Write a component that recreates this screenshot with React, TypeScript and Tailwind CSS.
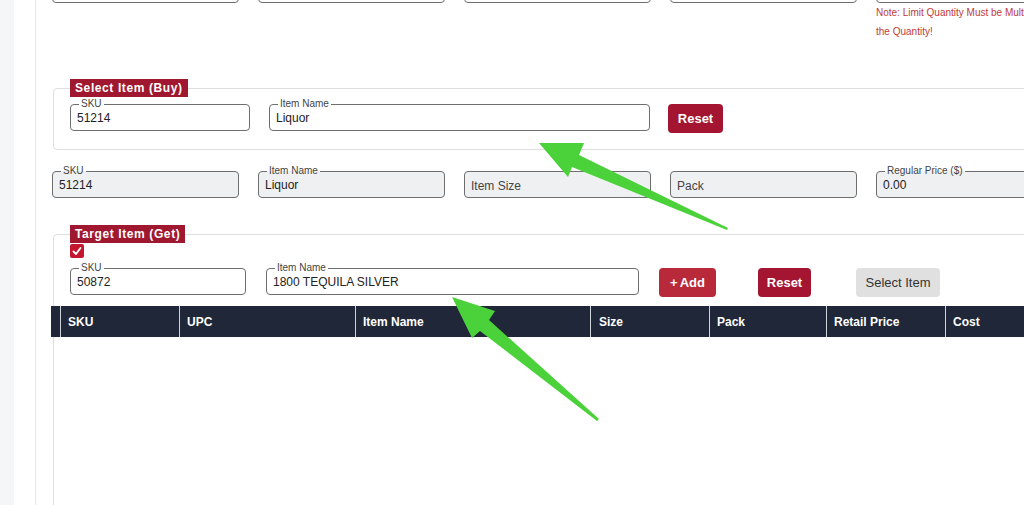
import React from "react";

type FieldProps = {
  label?: string;
  value?: string;
  placeholder?: string;
  gray?: boolean;
  className: string;
};

function Field({ label, value, placeholder, gray, className }: FieldProps) {
  return (
    <div
      className={`relative h-[27px] shrink-0 rounded-[4px] border border-[#6e6e6e] flex items-center pl-[6px] ${
        gray ? "bg-[#eff0f2]" : "bg-white"
      } ${className}`}
    >
      {label && (
        <span
          className={`absolute left-[8px] top-[-7px] px-[2px] text-[10px] leading-[11px] text-[#444] whitespace-nowrap ${
            gray
              ? "bg-[linear-gradient(to_bottom,#ffffff_55%,#eff0f2_55%)]"
              : "bg-white"
          }`}
        >
          {label}
        </span>
      )}
      {value && <span className="text-[12px] leading-[14px] text-[#222] pt-[1px] whitespace-nowrap">{value}</span>}
      {placeholder && (
        <span className="text-[12px] leading-[14px] text-[#444] pt-[2px] whitespace-nowrap">{placeholder}</span>
      )}
    </div>
  );
}

function Legend({ children }: { children: React.ReactNode }) {
  return (
    <legend className="bg-[#a01830] px-[5px] text-[12px] leading-[18px] font-bold tracking-[0.6px] text-white">
      {children}
    </legend>
  );
}

function HeadCell({ children, className }: { children?: React.ReactNode; className: string }) {
  return (
    <div
      className={`h-full shrink-0 border-l border-[#cfd3da] flex items-center pl-[7px] text-[12px] font-bold text-white whitespace-nowrap ${className}`}
    >
      {children}
    </div>
  );
}

export default function App() {
  return (
    <div className="relative flex h-[505px] w-[1024px] overflow-hidden bg-white font-['Liberation_Sans',Arial,sans-serif]">
      <div className="w-[14px] shrink-0 bg-[#f5f6f8]" />
      <div className="w-[22px] shrink-0 border-r border-[#e6e7ea]" />
      <div className="flex w-[1200px] shrink-0 flex-col pl-[16px]">
        {/* top row (cut off) */}
        <div className="mt-[-24px] flex items-start gap-[19px]">
          <Field className="w-[187px]" />
          <Field className="w-[187px]" />
          <Field className="w-[187px]" />
          <Field className="w-[187px]" />
          <div className="flex w-[187px] shrink-0 flex-col">
            <Field className="w-[187px]" />
            <div className="text-[10px] leading-[19px] text-[#c23a3a] whitespace-nowrap">
              <div>Note: Limit Quantity Must be Multiple of</div>
              <div>the Quantity!</div>
            </div>
          </div>
        </div>

        <div className="mt-[19px] h-px w-full bg-[#dcdcdc]" />

        {/* Select Item (Buy) */}
        <fieldset className="ml-[1px] mt-[19px] w-[1100px] rounded-[4px] border border-[#dedede] px-[16px] pt-[7px] pb-[16px]">
          <Legend>Select Item (Buy)</Legend>
          <div className="flex items-start">
            <Field className="w-[180px]" label="SKU" value="51214" />
            <Field className="ml-[19px] w-[381px]" label="Item Name" value="Liquor" />
            <button className="ml-[18px] h-[29px] w-[55px] rounded-[4px] bg-[#a31530] text-[13px] font-bold text-white">
              Reset
            </button>
          </div>
        </fieldset>

        {/* info row */}
        <div className="mt-[21px] flex items-start gap-[19px]">
          <Field className="w-[187px]" gray label="SKU" value="51214" />
          <Field className="w-[187px]" gray label="Item Name" value="Liquor" />
          <Field className="w-[187px]" gray placeholder="Item Size" />
          <Field className="w-[187px]" gray placeholder="Pack" />
          <Field className="w-[187px]" gray label="Regular Price ($)" value="0.00" />
        </div>

        <div className="mt-[21px] h-px w-full bg-[#dcdcdc]" />

        {/* Target Item (Get) */}
        <fieldset className="ml-[1px] mt-[6px] w-[1100px] rounded-[4px] border border-[#dedede] px-[16px] pt-[1px] pb-[300px]">
          <Legend>Target Item (Get)</Legend>
          <div className="flex h-[14px] w-[14px] items-center justify-center rounded-[2px] bg-[#c4162e]">
            <svg width="12" height="12" viewBox="0 0 12 12" fill="none">
              <polyline points="2.5,6.5 5,9 9.5,3" stroke="white" strokeWidth="1.8" strokeLinecap="round" strokeLinejoin="round" />
            </svg>
          </div>
          <div className="mt-[10px] flex items-start">
            <Field className="w-[176px]" label="SKU" value="50872" />
            <Field className="ml-[20px] w-[373px]" label="Item Name" value="1800 TEQUILA SILVER" />
            <button className="ml-[20px] flex h-[29px] w-[57px] items-center justify-center rounded-[4px] bg-[#b8293a] text-[13px] font-bold text-white">
              <span>+</span>
              <span className="ml-[2px]">Add</span>
            </button>
            <button className="ml-[42px] h-[29px] w-[53px] rounded-[4px] bg-[#a31530] text-[13px] font-bold text-white">
              Reset
            </button>
            <button className="ml-[45px] h-[29px] w-[84px] rounded-[4px] bg-[#e0e0e0] text-[13px] text-[#333]">
              Select Item
            </button>
          </div>
          <div className="ml-[-19px] mt-[9px] flex h-[31px] w-[1100px] bg-[#1f2739]">
            <div className="h-full w-[9px] shrink-0" />
            <HeadCell className="w-[119px]">SKU</HeadCell>
            <HeadCell className="w-[176px] pl-[5px]">UPC</HeadCell>
            <HeadCell className="w-[235px] pl-[6px]">Item Name</HeadCell>
            <HeadCell className="w-[119px] pl-[8px]">Size</HeadCell>
            <HeadCell className="w-[117px]">Pack</HeadCell>
            <HeadCell className="w-[119px]">Retail Price</HeadCell>
            <HeadCell className="w-[200px]">Cost</HeadCell>
          </div>
        </fieldset>
      </div>

      {/* annotation arrows */}
      <svg
        className="pointer-events-none absolute left-0 top-0"
        width="1024"
        height="505"
        viewBox="0 0 1024 505"
      >
        <polygon
          points="539,143 584,143 579,155 728,228 727,230 572,167 568,177"
          fill="#4bd23a"
        />
        <polygon
          points="452,297 495,311 489,320 599,419 597,421 480,331 472,338"
          fill="#4bd23a"
        />
      </svg>
    </div>
  );
}
